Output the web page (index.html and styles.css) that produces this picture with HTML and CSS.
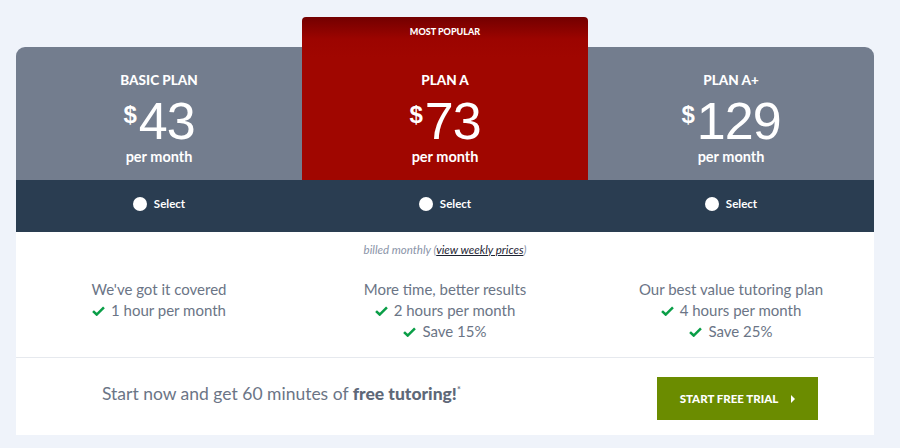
FILE: index.html
```html
<!DOCTYPE html>
<html>
<head>
<meta charset="utf-8">
<link rel="stylesheet" href="styles.css">
</head>
<body>
<div class="page">
  <div class="pricing">
    <div class="plans">
      <div class="plan plan-left">
        <div class="plan-title">BASIC PLAN</div>
        <div class="price"><span class="cur">$</span>43</div>
        <div class="per">per month</div>
      </div>
      <div class="plan plan-popular">
        <div class="popular-label">MOST POPULAR</div>
        <div class="plan-title">PLAN A</div>
        <div class="price"><span class="cur">$</span>73</div>
        <div class="per">per month</div>
      </div>
      <div class="plan plan-right">
        <div class="plan-title">PLAN A+</div>
        <div class="price"><span class="cur">$</span>129</div>
        <div class="per">per month</div>
      </div>
    </div>
    <div class="selects">
      <label class="select"><span class="radio"></span>Select</label>
      <label class="select"><span class="radio"></span>Select</label>
      <label class="select"><span class="radio"></span>Select</label>
    </div>
    <div class="details">
      <div class="billed">billed monthly (<a href="#">view weekly prices</a>)</div>
      <div class="features">
        <ul class="feat">
          <li>We've got it covered</li>
          <li><svg class="check" viewBox="0 0 14 11"><path d="M1 5.6 L5 9.4 L13 1.6" fill="none" stroke="#0a9e47" stroke-width="2.8"/></svg>1 hour per month</li>
        </ul>
        <ul class="feat">
          <li>More time, better results</li>
          <li><svg class="check" viewBox="0 0 14 11"><path d="M1 5.6 L5 9.4 L13 1.6" fill="none" stroke="#0a9e47" stroke-width="2.8"/></svg>2 hours per month</li>
          <li><svg class="check" viewBox="0 0 14 11"><path d="M1 5.6 L5 9.4 L13 1.6" fill="none" stroke="#0a9e47" stroke-width="2.8"/></svg>Save 15%</li>
        </ul>
        <ul class="feat">
          <li>Our best value tutoring plan</li>
          <li><svg class="check" viewBox="0 0 14 11"><path d="M1 5.6 L5 9.4 L13 1.6" fill="none" stroke="#0a9e47" stroke-width="2.8"/></svg>4 hours per month</li>
          <li><svg class="check" viewBox="0 0 14 11"><path d="M1 5.6 L5 9.4 L13 1.6" fill="none" stroke="#0a9e47" stroke-width="2.8"/></svg>Save 25%</li>
        </ul>
      </div>
    </div>
    <div class="footer">
      <div class="promo">Start now and get 60 minutes of <b>free tutoring!</b><sup>*</sup></div>
      <a class="trial" href="#">START FREE TRIAL <span class="caret"></span></a>
    </div>
  </div>
</div>
</body>
</html>
```

FILE: styles.css
```css
html, body {
  margin: 0;
  padding: 0;
  background: #eff3fa;
}
body {
  font-family: Lato, "Open Sans", sans-serif;
  color: #6b7586;
}
.page {
  padding: 17px 26px 13px 16px;
}
.pricing {
  width: 858px;
  background: #fff;
}
.plans {
  display: flex;
  align-items: flex-end;
  background: #eff3fa;
}
.plan {
  flex: 1;
  height: 133px;
  box-sizing: border-box;
  padding-top: 25px;
  text-align: center;
  color: #fff;
  background: #737d8e;
}
.plan-left { border-top-left-radius: 9px; }
.plan-right { border-top-right-radius: 9px; }
.plan-popular {
  height: 163px;
  padding-top: 0;
  border-radius: 4px 4px 0 0;
  background: linear-gradient(to bottom, #730000 0px, #9c0400 22px, #a00600 40px);
}
.popular-label {
  height: 30px;
  line-height: 30px;
  font-size: 9px;
  font-weight: 900;
  margin-bottom: 25px;
}
.plan-title {
  font-size: 13.5px;
  font-weight: 900;
  line-height: 16px;
  height: 16px;
}
.price {
  margin-top: 10px;
  font-family: "Liberation Sans", Arial, sans-serif;
  font-size: 52px;
  line-height: 46px;
  height: 46px;
  letter-spacing: -1px;
}
.cur {
  font-size: 24px;
  font-weight: 700;
  vertical-align: top;
  position: relative;
  top: -6px;
  margin-right: 2px;
  letter-spacing: 0;
}
.per {
  margin-top: 4px;
  font-size: 14.5px;
  font-weight: 700;
  line-height: 18px;
}
.selects {
  display: flex;
  height: 52px;
  background: #2a3d51;
}
.select {
  flex: 1;
  display: flex;
  align-items: center;
  justify-content: center;
  color: #fff;
  font-size: 11.5px;
  font-weight: 700;
  padding-bottom: 5px;
}
.radio {
  width: 14px;
  height: 14px;
  border-radius: 50%;
  background: #fff;
  margin-right: 7px;
}
.details {
  padding-top: 11px;
  padding-bottom: 15px;
  border-bottom: 1px solid #e6e9ee;
}
.billed {
  text-align: center;
  font-size: 11.5px;
  font-style: italic;
  color: #8a94a8;
  line-height: 14px;
}
.billed a {
  color: #1d2433;
  text-decoration: underline;
}
.features {
  display: flex;
  margin-top: 22px;
}
.feat {
  flex: 1;
  list-style: none;
  margin: 0;
  padding: 0;
  text-align: center;
  font-size: 15px;
  line-height: 21px;
  color: #6b7586;
}
.check {
  width: 13px;
  height: 10px;
  margin-right: 6px;
  vertical-align: 0;
}
.features .feat:first-child {
  padding-bottom: 21px;
}
.footer {
  display: flex;
  align-items: flex-start;
  height: 77px;
  padding-left: 86px;
}
.promo {
  font-size: 17.5px;
  line-height: 20px;
  color: #6b7586;
  width: 555px;
  margin-top: 22px;
}
.promo b {
  font-weight: 900;
  color: #5e6878;
}
.promo sup {
  font-size: 9px;
  font-weight: 700;
}
.trial {
  width: 161px;
  height: 43px;
  margin-top: 19px;
  display: flex;
  align-items: center;
  justify-content: center;
  background: #6b8c00;
  color: #fff;
  font-size: 11.5px;
  font-weight: 900;
  text-decoration: none;
}
.caret {
  display: inline-block;
  width: 0;
  height: 0;
  border-left: 4px solid #fff;
  border-top: 4px solid transparent;
  border-bottom: 4px solid transparent;
  margin-left: 13px;
}
```
